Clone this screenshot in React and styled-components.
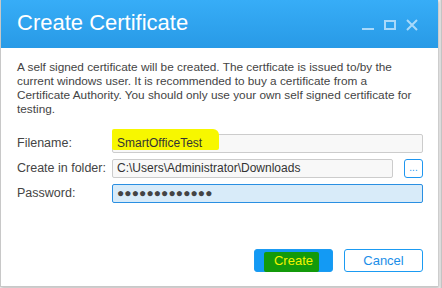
import React from "react";
import styled, { createGlobalStyle } from "styled-components";

const Global = createGlobalStyle`
  html, body { margin: 0; padding: 0; background: #f2f2f2; overflow: hidden; }
  #root { width: 442px; height: 288px; }
`;

const Page = styled.div`
  width: 442px;
  height: 288px;
  display: flex;
  align-items: flex-start;
  background: #f4f4f4;
  font-family: "Liberation Sans", Arial, sans-serif;
`;

const Dialog = styled.div`
  width: 437px;
  height: 286px;
  background: #fff;
  border-left: 1px solid #c8c8c8;
  border-bottom: 1px solid #c8c8c8;
  box-shadow: 1px 1px 3px rgba(0, 0, 0, 0.25);
  display: flex;
  flex-direction: column;
`;

const RightEdge = styled.div`
  flex: 1;
  height: 288px;
  border-left: 1px solid #dcdcdc;
  margin-left: 2px;
  display: flex;
  justify-content: center;
`;

const EdgeLine = styled.div`
  width: 1px;
  height: 100%;
  background: #c4c4c4;
`;

const TitleBar = styled.div`
  height: 48px;
  flex: none;
  background: linear-gradient(#37adf7, #289ae6);
  display: flex;
  align-items: center;
  padding: 0 20px 0 16px;
`;

const Title = styled.div`
  flex: 1;
  color: #fff;
  font-size: 22px;
  padding-bottom: 2px;
`;

const Controls = styled.div`
  display: flex;
  align-items: center;
  gap: 9px;
  padding-top: 2px;
`;

const Desc = styled.div`
  padding: 12px 16px 0 16px;
  font-size: 11.8px;
  line-height: 14px;
  color: #444;
  white-space: nowrap;
`;

const Form = styled.div`
  display: grid;
  grid-template-columns: 95px 1fr;
  row-gap: 6px;
  padding: 18px 15px 0 16px;
`;

const Label = styled.div`
  font-size: 12.5px;
  color: #444;
  padding-top: 2px;
`;

const FieldRow = styled.div`
  display: flex;
  gap: 11px;
`;

const Input = styled.div`
  position: relative;
  flex: 1;
  height: 17px;
  border: 1px solid ${(p) => (p.$focus ? "#2a8fe2" : "#cccccc")};
  background: ${(p) => (p.$focus ? "#d8ebf9" : "#f8f8f8")};
  border-radius: 2px;
  font-size: 12px;
  color: #333;
  line-height: 17px;
  padding: 0 4px;
  display: flex;
  align-items: center;
`;

const Highlight = styled.span`
  position: absolute;
  left: -1px;
  top: -6px;
  width: 107px;
  height: 21px;
  background: #f7f700;
  border-radius: 2px 6px 2px 2px;
`;

const HiText = styled.span`
  position: relative;
`;

const Dots = styled.span`
  font-size: 12px;
  letter-spacing: 0.1px;
  color: #444;
`;

const Browse = styled.div`
  box-sizing: border-box;
  width: 19px;
  height: 19px;
  border: 1px solid #1e96f0;
  border-radius: 3px;
  background: #fff;
  color: #1e96f0;
  font-size: 10px;
  display: flex;
  align-items: center;
  justify-content: center;
  padding-bottom: 2px;
`;

const Footer = styled.div`
  margin-top: auto;
  display: flex;
  justify-content: flex-end;
  gap: 11px;
  padding: 0 15px 14px 0;
`;

const Button = styled.div`
  position: relative;
  width: 79px;
  height: 23px;
  box-sizing: border-box;
  border-radius: 3px;
  border: 1px solid #1b9bf2;
  background: ${(p) => (p.$primary ? "#139af4" : "#fff")};
  color: ${(p) => (p.$primary ? "#f4f400" : "#1b8ee8")};
  font-size: 13px;
  display: flex;
  align-items: center;
  justify-content: center;
`;

const GreenMark = styled.span`
  position: absolute;
  left: 9px;
  top: 2px;
  width: 55px;
  height: 20px;
  background: #139a0a;
  border-radius: 2px;
`;

const BtnText = styled.span`
  position: relative;
`;

function WinControls() {
  const c = "#a9d9fa";
  return (
    <Controls>
      <svg width="13" height="12" viewBox="0 0 13 12">
        <rect x="0" y="9" width="12" height="2" fill={c} />
      </svg>
      <svg width="13" height="12" viewBox="0 0 13 12">
        <rect x="1" y="2" width="10" height="8" fill="none" stroke={c} strokeWidth="2" />
      </svg>
      <svg width="12" height="12" viewBox="0 0 12 12">
        <path d="M1 1 L11 11 M11 1 L1 11" stroke={c} strokeWidth="2" />
      </svg>
    </Controls>
  );
}

export default function App() {
  return (
    <Page>
      <Global />
      <Dialog>
        <TitleBar>
          <Title>Create Certificate</Title>
          <WinControls />
        </TitleBar>
        <Desc>
          A self signed certificate will be created. The certficate is issued to/by the
          <br />
          current windows user. It is recommended to buy a certificate from a
          <br />
          Certificate Authority. You should only use your own self signed certificate for
          <br />
          testing.
        </Desc>
        <Form>
          <Label>Filename:</Label>
          <FieldRow>
            <Input>
              <Highlight />
              <HiText>SmartOfficeTest</HiText>
            </Input>
          </FieldRow>
          <Label>Create in folder:</Label>
          <FieldRow>
            <Input>C:\Users\Administrator\Downloads</Input>
            <Browse>...</Browse>
          </FieldRow>
          <Label>Password:</Label>
          <FieldRow>
            <Input $focus>
              <Dots>●●●●●●●●●●●●●</Dots>
            </Input>
          </FieldRow>
        </Form>
        <Footer>
          <Button $primary>
            <GreenMark />
            <BtnText>Create</BtnText>
          </Button>
          <Button>Cancel</Button>
        </Footer>
      </Dialog>
      <RightEdge>
        <EdgeLine />
      </RightEdge>
    </Page>
  );
}
